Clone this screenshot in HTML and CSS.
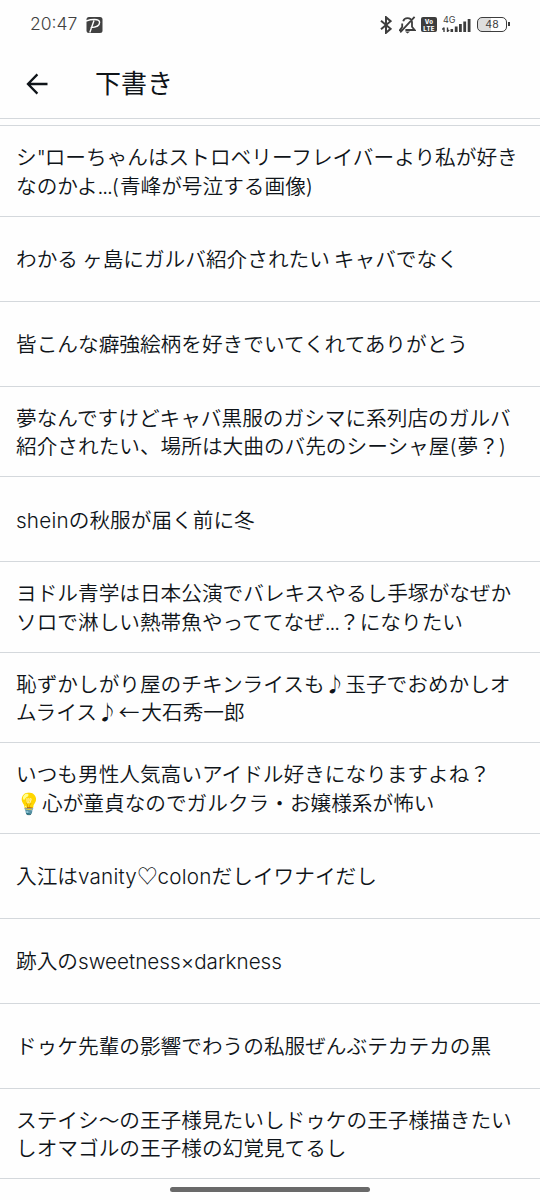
FILE: index.html
```html
<!DOCTYPE html>
<html lang="ja">
<head>
    <meta charset="UTF-8">
    <meta name="viewport" content="width=device-width, initial-scale=1.0">
    <title>下書き</title>
    <link rel="stylesheet" href="styles.css">
</head>
<body>
    <div class="status-bar">
        <span class="clock">20:47</span>
        <svg class="paypay" width="17" height="16" viewBox="0 0 17 16">
            <rect x="0.5" y="0" width="16" height="16" rx="2.5" fill="#414141"/>
            <path d="M0 4C5 2.2 13.4 1.4 13.6 5.2C13.6 8.6 9.6 10.4 4.6 10.6M8 3.4L3.8 15.5" fill="none" stroke="#fff" stroke-width="1.4"/>
        </svg>
        <div class="status-icons">
            <svg width="12" height="18" viewBox="0 0 12 18">
                <path d="M1 4.8L10.6 12.8L6 16.8V1.2L10.6 5.2L1 13.2" fill="none" stroke="#3d3d3d" stroke-width="2"/>
            </svg>
            <svg class="bell" width="17" height="18" viewBox="0 0 17 18">
                <path d="M4.2 5.2C5.4 1.6 11.6 0.6 13 6V10.8L15.6 14H6.4M3.2 7.6V11L1 14H2.4M1.2 16.4L15.6 0.8" fill="none" stroke="#3d3d3d" stroke-width="1.8"/>
                <path d="M6 15.5H11L8.5 17.4Z" fill="#3d3d3d"/>
            </svg>
            <div class="volte"><span>Vo</span><span>LTE</span></div>
            <div class="signal">
                <span class="signal-type">4G</span>
                <svg width="29" height="15" viewBox="0 0 29 15">
                    <path d="M2 9.5V14M0.3 11.5L2 9.8M5.5 9.5V14M5.5 13.6L7.2 12" fill="none" stroke="#3d3d3d" stroke-width="1.4"/>
                    <path d="M8.5 11h2.6v3h-2.6zM12.8 8.5h2.8V14h-2.8zM17 6h2.8v8H17zM21.3 3.5h2.8V14h-2.8zM25.7 1h2.8v13h-2.8z" fill="#3d3d3d"/>
                </svg>
            </div>
            <div class="battery"><span>48</span></div>
        </div>
    </div>
    <header>
        <svg class="back" width="22" height="22" viewBox="0 0 22 22">
            <path d="M11.4 1.4L2 11L11.4 20.6M2 11H21.5" fill="none" stroke="#0f1419" stroke-width="2.3"/>
        </svg>
        <h1>下書き</h1>
    </header>
    <ul class="drafts">
        <li><p>シ<span class="tight">"</span>ローちゃんはストロベリーフレイバーより私が好き<br>なのかよ<span class="tight">...</span><span class="paren">(</span>青峰が号泣する画像<span class="paren">)</span></p></li>
        <li><p>わかる ヶ島にガルバ紹介されたい キャバでなく</p></li>
        <li><p>皆こんな癖強絵柄を好きでいてくれてありがとう</p></li>
        <li><p>夢なんですけどキャバ黒服のガシマに系列店のガルバ<br>紹介されたい、場所は大曲のバ先のシーシャ屋<span class="paren">(</span>夢？<span class="paren">)</span></p></li>
        <li><p><span class="latin">shein</span>の秋服が届く前に冬</p></li>
        <li><p>ヨドル青学は日本公演でバレキスやるし手塚がなぜか<br>ソロで淋しい熱帯魚やっててなぜ<span class="tight">...</span>？になりたい</p></li>
        <li><p>恥ずかしがり屋のチキンライスも♪玉子でおめかしオ<br>ムライス♪<span class="arrow">←</span>大石秀一郎</p></li>
        <li><p>いつも男性人気高いアイドル好きになりますよね？<br><span class="emoji">💡</span>心が童貞なのでガルクラ・お嬢様系が怖い</p></li>
        <li><p>入江は<span class="latin">vanity</span><span class="heart">♡</span><span class="latin">colon</span>だしイワナイだし</p></li>
        <li><p>跡入のsweetness×darkness</p></li>
        <li><p>ドゥケ先輩の影響でわうの私服ぜんぶテカテカの黒</p></li>
        <li><p>ステイシ〜の王子様見たいしドゥケの王子様描きたい<br>しオマゴルの王子様の幻覚見てるし</p></li>
    </ul>
    <div class="home-bar"></div>
</body>
</html>
```

FILE: styles.css
```css
* {
    box-sizing: border-box;
}

body {
    margin: 0;
    height: 1200px;
    overflow: hidden;
    display: flex;
    flex-direction: column;
    background-color: #fefefe;
    color: #0f1419;
    font-family: "Inter", "Noto Sans CJK JP", sans-serif;
}

.status-bar {
    height: 49px;
    padding: 0 33px 0 30px;
    display: flex;
    align-items: center;
    color: #414141;
}

.clock {
    font-size: 17.5px;
    font-weight: 300;
    line-height: 20px;
    margin-top: -1px;
}

.paypay {
    margin-left: 9px;
}

.status-icons {
    margin-left: auto;
    display: flex;
    align-items: center;
}

.bell {
    margin-left: 7px;
}

.volte {
    width: 16px;
    height: 15px;
    margin-left: 5px;
    border-radius: 2px;
    background-color: #3d3d3d;
    color: #fff;
    font-size: 6px;
    font-weight: 800;
    line-height: 7px;
    letter-spacing: 0.3px;
    display: flex;
    flex-direction: column;
    align-items: center;
    justify-content: center;
}

.signal {
    position: relative;
    height: 17px;
    margin-left: 5px;
    display: flex;
    align-items: flex-end;
}

.signal-type {
    position: absolute;
    left: 1px;
    top: 0;
    font-size: 9px;
    line-height: 8px;
}

.battery {
    position: relative;
    width: 30px;
    height: 15px;
    margin-left: 6px;
    border: 1.5px solid #3d3d3d;
    border-radius: 5px;
    background: linear-gradient(to right, #dedede 48%, #fff 48%);
    font-size: 10.5px;
    line-height: 13px;
    text-align: center;
}

.battery::after {
    content: "";
    position: absolute;
    right: -4px;
    top: 4px;
    width: 2px;
    height: 4px;
    background-color: #3d3d3d;
}

header {
    height: 70px;
    padding-left: 26px;
    display: flex;
    align-items: center;
    border-bottom: 1px solid #d4d8dc;
}

h1 {
    margin: 0 0 0 47px;
    font-size: 26px;
    font-weight: 400;
    line-height: 34px;
}

.drafts {
    margin: 6px 0 0;
    padding: 0;
    list-style: none;
    border-top: 1px solid #d4d8dc;
}

.drafts li {
    min-height: 85px;
    padding: 18px 16px 14px;
    display: flex;
    align-items: center;
    border-bottom: 1px solid #d4d8dc;
}

.drafts p {
    margin: 0;
    font-size: 20.66px;
    font-weight: 350;
    line-height: 28.75px;
    word-spacing: -1.8px;
    white-space: nowrap;
}

.tight {
    letter-spacing: -1.1px;
}

.paren {
    letter-spacing: 0.9px;
}

.latin {
    letter-spacing: 0.2px;
}

.arrow,
.heart {
    font-family: "Noto Sans CJK JP", sans-serif;
    line-height: 1;
}

.arrow {
    margin: 0 2px 0 1px;
}

.home-bar {
    width: 200px;
    height: 5px;
    margin: auto auto 8px;
    border-radius: 3px;
    background-color: #696969;
}
```
